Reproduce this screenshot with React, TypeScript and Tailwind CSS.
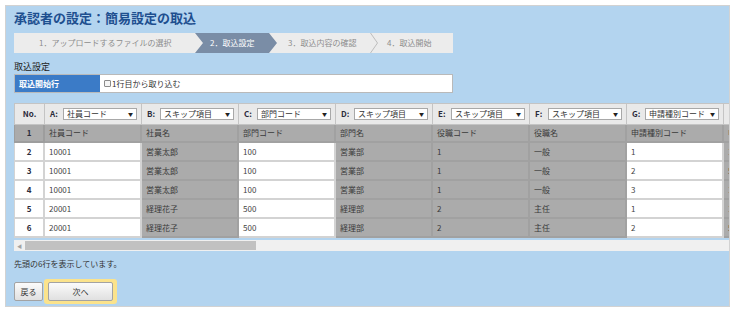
import React from "react";

type Kind = "w" | "g";

const colKinds: Kind[] = ["w", "g", "w", "g", "g", "g", "w", "g"];
const headers: { l: string; v: string }[] = [
  { l: "A:", v: "社員コード" },
  { l: "B:", v: "スキップ項目" },
  { l: "C:", v: "部門コード" },
  { l: "D:", v: "スキップ項目" },
  { l: "E:", v: "スキップ項目" },
  { l: "F:", v: "スキップ項目" },
  { l: "G:", v: "申請種別コード" },
  { l: "H:", v: "スキップ項目" },
];

const rows: string[][] = [
  ["社員コード", "社員名", "部門コード", "部門名", "役職コード", "役職名", "申請種別コード", "申請者"],
  ["10001", "営業太郎", "100", "営業部", "1", "一般", "1", "1"],
  ["10001", "営業太郎", "100", "営業部", "1", "一般", "2", "5"],
  ["10001", "営業太郎", "100", "営業部", "1", "一般", "3", "1"],
  ["20001", "経理花子", "500", "経理部", "2", "主任", "1", "1"],
  ["20001", "経理花子", "500", "経理部", "2", "主任", "2", "5"],
];

const font = { fontFamily: '"Noto Sans CJK JP", "Noto Sans", sans-serif' };

export default function App() {
  return (
    <div className="w-[733px] h-[311px] bg-white pt-[5px] pl-[5px] overflow-hidden" style={font}>
      <div className="w-[725px] h-[302px] border border-[#d2d2d2] bg-[#b3d4ef] pl-[8px] flex flex-col">
        {/* title */}
        <div className="mt-[2px] h-[20px] leading-[20px] text-[13px] font-bold text-[#1e4f8f] whitespace-nowrap">
          承認者の設定：簡易設定の取込
        </div>

        {/* breadcrumb */}
        <div className="mt-[5px] w-[439px] h-[20px] bg-[#ececec] flex items-stretch text-[8px] leading-[20px] whitespace-nowrap">
          <div className="w-[181px] pl-[25px] text-[#8c8c8c]">1．アップロードするファイルの選択</div>
          <div
            className="w-[82px] pl-[15px] bg-[#7a8da6] text-white"
            style={{ clipPath: "polygon(0 0, calc(100% - 8px) 0, 100% 50%, calc(100% - 8px) 100%, 0 100%, 8px 50%)" }}
          >
            2．取込設定
          </div>
          <div className="w-[93px] pl-[11px] text-[#8c8c8c]">3．取込内容の確認</div>
          <svg width="8" height="20" viewBox="0 0 8 20" className="shrink-0">
            <polyline points="0.5,0 7.5,10 0.5,20" fill="none" stroke="#bdbdbd" strokeWidth="1" />
          </svg>
          <div className="flex-1 pl-[9px] text-[#8c8c8c]">4．取込開始</div>
        </div>

        {/* settings label */}
        <div className="mt-[7px] h-[14px] leading-[14px] text-[9px] text-[#222]">取込設定</div>

        {/* settings row */}
        <div className="w-[439px] h-[19px] flex border border-[#b9b9b9] bg-white text-[8px]">
          <div className="w-[85px] bg-[#3b7bc7] text-white font-bold pl-[4px] flex items-center">取込開始行</div>
          <div className="flex-1 flex items-center pl-[4px] text-[#333]">
            <span className="inline-block w-[7px] h-[7px] border border-[#8a8a8a] rounded-[1px] bg-[#f4f4f4] mr-[1px]" />
            1行目から取り込む
          </div>
        </div>

        {/* table */}
        <div className="mt-[10px] w-[715px] overflow-hidden">
          <table className="table-fixed border-separate border-spacing-0 w-[807px] text-[8px]">
            <colgroup>
              <col className="w-[31px]" />
              {colKinds.map((_, i) => (
                <col key={i} className="w-[97px]" />
              ))}
            </colgroup>
            <thead>
              <tr className="h-[22px]">
                <th className="bg-[#e9e9e9] border-t border-l border-r border-b border-[#c4c4c4] font-bold text-[#2b2b3b] text-center">
                  No.
                </th>
                {headers.map((h, i) => (
                  <th
                    key={i}
                    className="bg-[#e9e9e9] border-t border-r border-b border-[#c4c4c4] text-left font-normal"
                  >
                    <div className="flex items-center pl-[5px] pr-[4px]">
                      <span className="font-bold text-[#2b2b3b] w-[13px] shrink-0">{h.l}</span>
                      <div className="flex-1 h-[12px] bg-white border border-[#a8a8a8] flex items-center pl-[3px] pr-[3px] text-[#333] overflow-hidden whitespace-nowrap">
                        <span className="flex-1 overflow-hidden">{h.v}</span>
                        <span className="text-[5px] text-[#222] ml-[1px]">▼</span>
                      </div>
                    </div>
                  </th>
                ))}
              </tr>
            </thead>
            <tbody>
              {rows.map((r, ri) => {
                const first = ri === 0;
                return (
                  <tr key={ri} className={first ? "h-[18px]" : "h-[19px]"}>
                    <td
                      className={
                        "border-l border-r-2 border-b-2 text-center font-bold text-[#2b2b3b] " +
                        (first ? "bg-[#ababab] border-[#9d9d9d]" : "bg-white border-[#d3d3d3]")
                      }
                    >
                      {ri + 1}
                    </td>
                    {r.map((c, ci) => {
                      const gray = first || colKinds[ci] === "g";
                      return (
                        <td
                          key={ci}
                          className={
                            "border-r-2 border-b-2 pl-[4px] whitespace-nowrap overflow-hidden " +
                            (gray
                              ? "bg-[#ababab] border-[#a1a1a1] text-[#3a3a3a]"
                              : "bg-white border-[#d3d3d3] text-[#444]")
                          }
                        >
                          {c}
                        </td>
                      );
                    })}
                  </tr>
                );
              })}
            </tbody>
          </table>
        </div>

        {/* scrollbar */}
        <div className="mt-[2px] w-[715px] h-[11px] bg-[#f0f0f0] flex items-center">
          <div className="w-[11px] h-full flex items-center justify-center text-[5px] text-[#a3a3a3]">◀</div>
          <div className="w-[231px] h-[9px] bg-[#c1c1c1]" />
        </div>

        {/* info text */}
        <div className="mt-[6px] h-[14px] leading-[14px] text-[8px] text-[#333]">先頭の6行を表示しています。</div>

        {/* buttons */}
        <div className="mt-[8px] flex items-center">
          <button className="w-[29px] h-[19px] border border-[#a3a3a3] rounded-[2px] bg-gradient-to-b from-[#fbfbfb] to-[#e0e0e0] text-[8px] text-[#333]">
            戻る
          </button>
          <div className="ml-[1px] rounded-[3px] bg-[#fbe38c] px-[4px] py-[3px]">
            <button className="w-[65px] h-[19px] border border-[#a3a3a3] rounded-[2px] bg-gradient-to-b from-[#fbfbfb] to-[#e0e0e0] text-[8px] text-[#333] block">
              次へ
            </button>
          </div>
        </div>
      </div>
    </div>
  );
}
